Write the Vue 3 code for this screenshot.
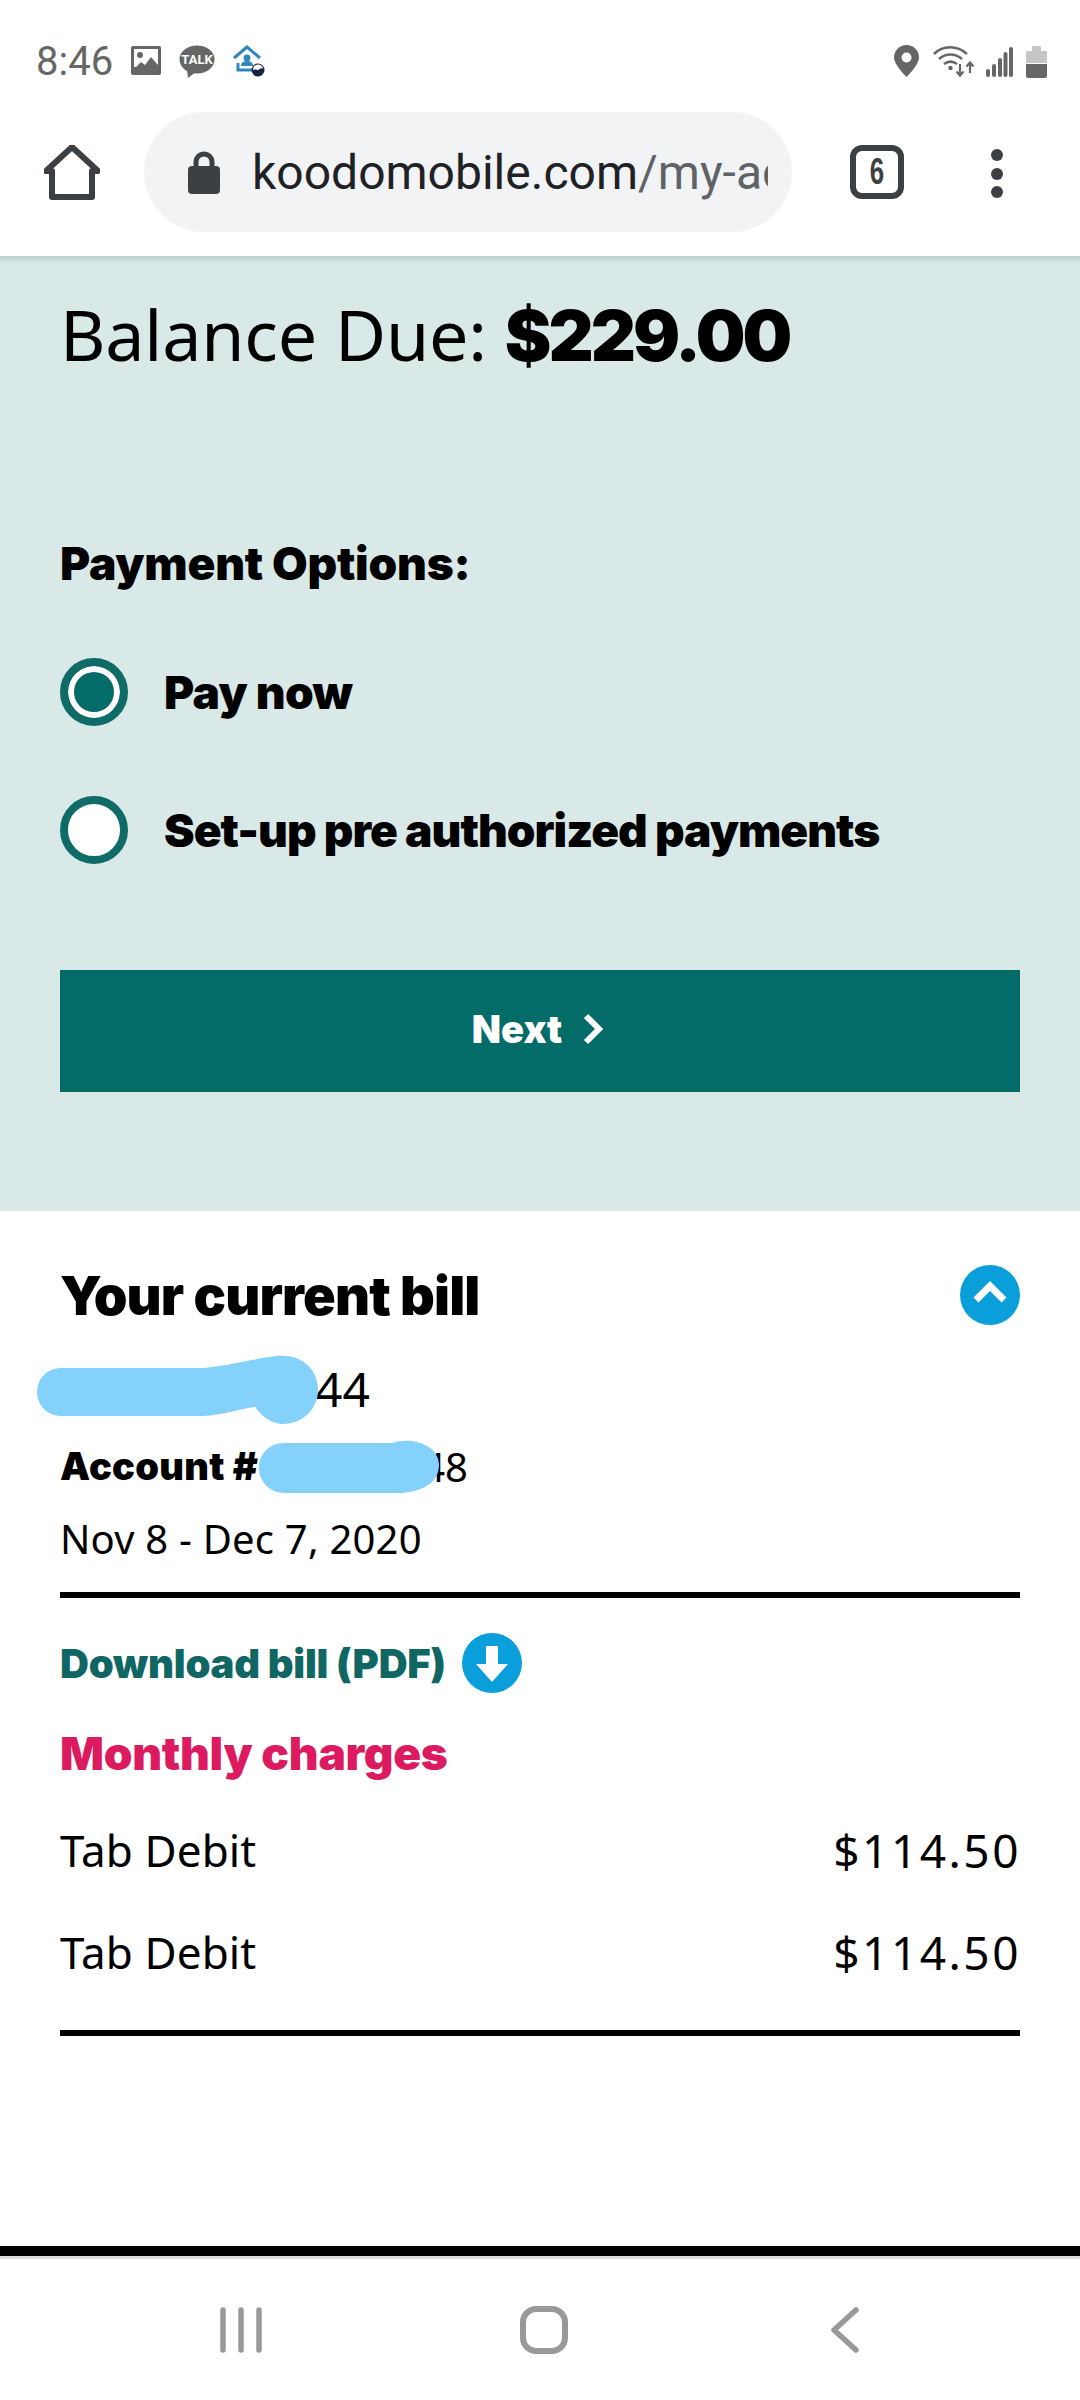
<script setup>
const charges = [
  { label: 'Tab Debit', amount: '$114.50' },
  { label: 'Tab Debit', amount: '$114.50' }
]
</script>

<template>
  <div class="screen">
    <header class="status">
      <div class="status-left">
        <span class="time">8:46</span>
        <svg class="ic-photo" width="30" height="30" viewBox="0 0 30 30">
          <rect width="30" height="29" rx="2" fill="#666" />
          <rect x="3" y="3" width="24" height="20" fill="#fff" />
          <circle cx="9" cy="9" r="3" fill="#666" />
          <path d="M3 23l7-7 4 3 6-8 7 8v7H3z" fill="#666" />
          <rect x="3" y="21" width="24" height="5" fill="#666" />
        </svg>
        <svg class="ic-talk" width="36" height="33" viewBox="0 0 36 33">
          <ellipse cx="18" cy="14.5" rx="17.5" ry="14" fill="#666" />
          <path d="M8 24l1 9 9-7z" fill="#666" />
          <text x="18" y="19" text-anchor="middle" class="talk">TALK</text>
        </svg>
        <svg class="ic-house" width="32" height="32" viewBox="0 0 32 32">
          <path d="M1 13L14 2l13 11" fill="none" stroke="#2f86bd" stroke-width="3" />
          <circle cx="14" cy="13" r="3.4" fill="#2f86bd" />
          <path d="M8 21c0-4 3-5 6-5s6 1 6 5z" fill="#2f86bd" />
          <path d="M5 18v7h15" fill="none" stroke="#2f86bd" stroke-width="3" />
          <circle cx="25" cy="25" r="6.5" fill="#14233f" />
          <path d="M20 25a5 5 0 0 1 10-1c-2-2-4 1-5 1s-3-1-5 0z" fill="#fff" />
        </svg>
      </div>
      <div class="status-right">
        <svg class="ic-pin" width="25" height="32" viewBox="0 0 25 32">
          <path d="M12.500 0C5.500 0 0 5.500 0 12.500 0 20 12.500 32 12.500 32S25 20 25 12.500C25 5.500 19.500 0 12.500 0z" fill="#666" />
          <circle cx="12.500" cy="12.500" r="5" fill="#fff" />
        </svg>
        <svg class="ic-wifi" width="42" height="33" viewBox="0 0 42 33">
          <path d="M1 9C10 0 24 0 34 9M6 14c7-6 16-6 23 0M11 19c4-3 9-3 13 0" fill="none" stroke="#666" stroke-width="2.600" />
          <circle cx="17.500" cy="23" r="2.200" fill="#666" />
          <path d="M27 19v11M23.500 26.500l3.500 4 3.500-4M37 28V18M33.500 21.500l3.500-4 3.500 4" fill="none" stroke="#666" stroke-width="2.200" />
        </svg>
        <svg class="ic-signal" width="27" height="31" viewBox="0 0 27 31">
          <rect x="0" y="23" width="4" height="8" rx="2" fill="#666" />
          <rect x="6" y="18" width="4" height="13" rx="2" fill="#666" />
          <rect x="12" y="12" width="4" height="19" rx="2" fill="#666" />
          <rect x="17.500" y="6" width="4" height="25" rx="2" fill="#666" />
          <rect x="23" y="1" width="4" height="30" rx="2" fill="#666" />
        </svg>
        <svg class="ic-battery" width="21" height="33" viewBox="0 0 21 33">
          <path d="M6 2a1 1 0 0 1 1-1h7a1 1 0 0 1 1 1v4h5a1 1 0 0 1 1 1v11H0V7a1 1 0 0 1 1-1h5z" fill="#c6c6c6" />
          <path d="M0 19h21v12a2 2 0 0 1-2 2H2a2 2 0 0 1-2-2z" fill="#666" />
        </svg>
      </div>
    </header>

    <nav class="toolbar">
      <svg class="ic-home" width="56" height="56" viewBox="0 0 56 56">
        <path d="M8 53V27H2L28 3l26 24h-6v26z" transform="translate(0 -1)" fill="none" stroke="#3c4043" stroke-width="6" stroke-linejoin="round" />
      </svg>
      <div class="omnibox">
        <svg width="32" height="44" viewBox="0 0 32 44">
          <path d="M8 17v-5a8 8 0 0 1 16 0v5" fill="none" stroke="#3c4043" stroke-width="5" />
          <rect y="16" width="32" height="28" rx="4" fill="#3c4043" />
        </svg>
        <div class="url"><span class="host">koodomobile.com</span><span class="path">/my-ac</span></div>
      </div>
      <div class="tabs"><span>6</span></div>
      <div class="dots"><i></i><i></i><i></i></div>
    </nav>

    <section class="pay">
      <h1 class="balance">Balance Due: <b>$229.00</b></h1>
      <h2 class="options">Payment Options:</h2>
      <div class="option first">
        <span class="radio on"></span>
        <span>Pay now</span>
      </div>
      <div class="option second">
        <span class="radio"></span>
        <span>Set-up pre authorized payments</span>
      </div>
      <button class="next">
        <span>Next</span>
        <svg width="26" height="32" viewBox="0 0 26 32"><path d="M4 3l13 13L4 29" fill="none" stroke="#fff" stroke-width="6" /></svg>
      </button>
    </section>

    <section class="bill">
      <svg class="scribble one" width="284" height="72" viewBox="0 0 290 72" preserveAspectRatio="none">
        <circle cx="25" cy="38" r="24" fill="#84d2fc" />
        <path d="M25 14H170C200 12 240 0 255 2C275 3 288 18 288 36C288 55 272 70 252 70C240 70 228 60 224 53C200 56 190 62 165 62H25Z" fill="#84d2fc" />
      </svg>
      <svg class="scribble two" width="180" height="56" viewBox="0 0 176 56" preserveAspectRatio="none">
        <path d="M25 4H130C150 -3 176 6 176 26C176 44 160 52 140 54H25C10 54 0 42 0 29C0 15 10 4 25 4Z" fill="#84d2fc" />
      </svg>
      <div class="bill-head">
        <h2>Your current bill</h2>
        <svg width="60" height="60" viewBox="0 0 60 60">
          <circle cx="30" cy="30" r="30" fill="#0a9fdb" />
          <path d="M16 35l14-14 14 14" fill="none" stroke="#fff" stroke-width="7" />
        </svg>
      </div>
      <div class="phone">44</div>
      <div class="account"><b>Account #</b><span>48</span></div>
      <div class="dates">Nov 8 - Dec 7, 2020</div>
      <hr class="rule" />
      <div class="download">
        <span>Download bill (PDF)</span>
        <svg width="60" height="60" viewBox="0 0 60 60">
          <circle cx="30" cy="30" r="30" fill="#0a9fdb" />
          <path d="M24 13h12v18h10L30 49 14 31h10z" fill="#fff" />
        </svg>
      </div>
      <h3 class="monthly">Monthly charges</h3>
      <div class="charge" v-for="(c, i) in charges" :key="i">
        <span class="label">{{ c.label }}</span><span class="amount">{{ c.amount }}</span>
      </div>
      <hr class="rule end" />
    </section>

    <div class="spacer"></div>
    <div class="blackbar"></div>

    <footer class="navbar">
      <svg width="44" height="46" viewBox="0 0 44 46">
        <g fill="none" stroke="#999" stroke-width="5.500" stroke-linecap="round">
          <path d="M4 3v40M22 3v40M40 3v40" />
        </g>
      </svg>
      <svg class="nav-home" width="48" height="48" viewBox="0 0 48 48">
        <rect x="3" y="3" width="42" height="42" rx="13" fill="none" stroke="#999" stroke-width="6" />
      </svg>
      <svg width="30" height="46" viewBox="0 0 30 46">
        <path d="M26 3L4 23l22 20" fill="none" stroke="#999" stroke-width="5.500" stroke-linecap="round" stroke-linejoin="round" />
      </svg>
    </footer>
  </div>
</template>

<style>
html, body { margin: 0; background: #fff; }
</style>

<style scoped>
.screen {
  width: 1080px;
  height: 2400px;
  display: flex;
  flex-direction: column;
  background: #fff;
  font-family: "Noto Sans", "Open Sans", sans-serif;
  color: #000;
  overflow: hidden;
}
h1, h2, h3 { margin: 0; font-weight: 400; }

.status {
  height: 112px;
  box-sizing: border-box;
  padding: 10px 33px 0 36px;
  display: flex;
  justify-content: space-between;
  align-items: center;
  flex: none;
}
.status-left, .status-right { display: flex; align-items: center; }
.status-left { gap: 18px; }
.ic-wifi { margin-left: 14px; }
.ic-signal { margin-left: 11px; }
.ic-battery { margin-left: 13px; }
.time { font: 40px Roboto, sans-serif; color: #666; }
.talk { font: 700 13px Roboto, sans-serif; fill: #fff; }

.toolbar {
  height: 144px;
  flex: none;
  display: flex;
  align-items: flex-start;
  position: relative;
  z-index: 1;
  background: #fff;
}
.ic-home { margin: 33px 0 0 44px; }
.omnibox {
  margin-left: 44px;
  width: 648px;
  height: 120px;
  box-sizing: border-box;
  border-radius: 60px;
  background: #f1f3f4;
  display: flex;
  align-items: center;
  padding-left: 44px;
  gap: 32px;
}
.url {
  width: 516px;
  overflow: hidden;
  white-space: nowrap;
  font: 48px Roboto, sans-serif;
  color: #5f6368;
}
.host { color: #202124; }
.tabs {
  margin: 33px 0 0 58px;
  width: 54px;
  height: 54px;
  box-sizing: border-box;
  border: 6px solid #3c4043;
  border-radius: 12px;
  display: flex;
  align-items: center;
  justify-content: center;
  font: 700 36px "Liberation Sans", sans-serif;
  color: #3c4043;
}
.tabs span { transform: scaleX(0.72); }
.dots {
  margin: 37px 0 0 87px;
  display: flex;
  flex-direction: column;
  gap: 6.500px;
}
.dots i { width: 12px; height: 12px; border-radius: 50%; background: #3c4043; display: block; }

.pay {
  height: 955px;
  flex: none;
  box-sizing: border-box;
  padding: 33px 60px 0;
  background: linear-gradient(#b9cccb, #d9e9e8 7px);
  display: flex;
  flex-direction: column;
}
.balance { font-size: 70px; line-height: 90px; letter-spacing: -0.2px; }
.balance b { font-family: Inter, sans-serif; font-weight: 900; letter-spacing: -3px; }
.options {
  margin-top: 154px;
  font: 900 46px/56px Inter, sans-serif;
  letter-spacing: -0.2px;
}
.option {
  display: flex;
  align-items: center;
  gap: 36px;
  font: 900 46px/68px Inter, sans-serif;
}
.option.first { margin-top: 67px; letter-spacing: -0.6px; }
.option.second { margin-top: 70px; letter-spacing: -1px; }
.radio {
  width: 68px;
  height: 68px;
  box-sizing: border-box;
  border: 8px solid #0f6b68;
  border-radius: 50%;
  background: #fff;
  flex: none;
}
.radio.on { background: #036b68; box-shadow: inset 0 0 0 6px #fff; }
.next {
  margin-top: 106px;
  height: 122px;
  border: 0;
  padding: 0 0 4px;
  background: #036b68;
  color: #fff;
  font: 900 38px Inter, sans-serif;
  display: flex;
  align-items: center;
  justify-content: center;
  gap: 20px;
}

.bill { position: relative; padding: 0 60px; flex: none; }
.scribble { position: absolute; z-index: 1; }
.scribble.one { left: 36px; top: 143px; }
.scribble.two { left: 259px; top: 228px; }
.bill-head {
  margin-top: 54px;
  display: flex;
  justify-content: space-between;
  align-items: center;
  height: 60px;
}
.bill-head h2 { font: 900 54px Inter, sans-serif; letter-spacing: -0.8px; }
.phone { margin: 34px 0 0 255px; font-size: 48px; line-height: 60px; }
.account { display: flex; height: 56px; align-items: center; margin-top: 19px; font-size: 40px; }
.account b { font: 900 38px Inter, sans-serif; letter-spacing: 0.3px; }
.account span { margin-left: 164px; }
.dates { margin-top: 15px; font-size: 40px; line-height: 60px; letter-spacing: 0.2px; }
.rule { margin: 0; border: 0; height: 6px; background: #000; }
.dates + .rule { margin-top: 23px; }
.download {
  margin-top: 35px;
  height: 60px;
  display: flex;
  align-items: center;
  gap: 16px;
  font: 900 40px Inter, sans-serif;
  letter-spacing: -0.2px;
  color: #0f6663;
}
.monthly {
  margin-top: 32px;
  font: 900 46px/56px Inter, sans-serif;
  color: #dc1a60;
  letter-spacing: -0.3px;
}
.charge {
  display: flex;
  justify-content: space-between;
  height: 102px;
  align-items: center;
  font-size: 44px;
}
.monthly + .charge { margin-top: 18px; }
.label { letter-spacing: 0.1px; }
.rule.end { margin-top: 27px; }
.amount { letter-spacing: 2.5px; font-size: 46px; margin-right: -1px; }

.spacer { flex: 1; }
.blackbar {
  height: 10px;
  flex: none;
  background: #000;
  border-bottom: 3px solid #ddd;
}
.navbar {
  height: 141px;
  flex: none;
  display: flex;
  align-items: center;
  justify-content: space-between;
  padding: 0 220px 0 219px;
  box-sizing: border-box;
}
.nav-home { margin-right: 6px; }
</style>
